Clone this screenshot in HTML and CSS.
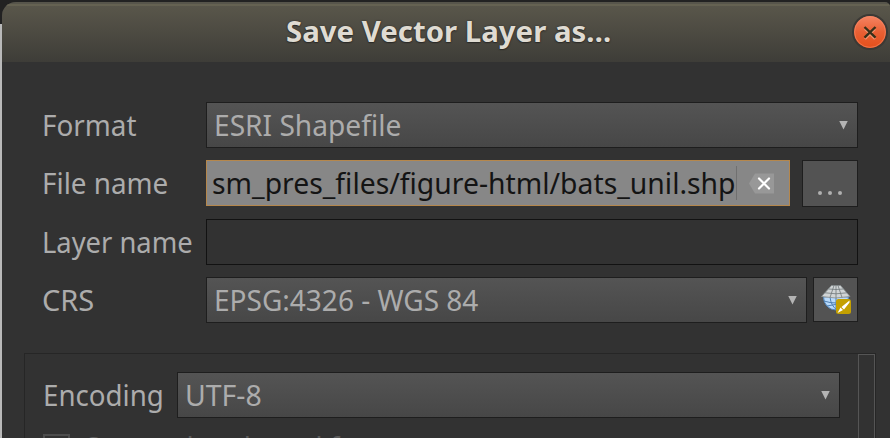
FILE: index.html
```
<!DOCTYPE html>
<html lang="en">
<head>
<meta charset="utf-8">
<title>Save Vector Layer as…</title>
<link rel="stylesheet" href="styles.css">
</head>
<body>
<main class="dialog">
  <header class="titlebar">
    <h1 class="title"><span class="t-title">Save Vector Layer as…</span></h1>
    <button class="close" aria-label="Close">
      <svg viewBox="0 0 36 36" width="36" height="36">
        <defs><linearGradient id="cl" x1="0" y1="0" x2="0" y2="1"><stop offset="0" stop-color="#f58463"/><stop offset=".5" stop-color="#ea6034"/><stop offset="1" stop-color="#e44f1b"/></linearGradient></defs>
        <circle cx="18" cy="18" r="18" fill="#3b3935"/>
        <circle cx="18" cy="18" r="16" fill="url(#cl)"/>
        <circle cx="18" cy="18" r="15.4" fill="none" stroke="#f58a68" stroke-opacity=".6"/>
        <path d="M13 15l10 10M23 15l-10 10" stroke="#f7946f" stroke-width="2.4"/>
        <path d="M12.500 13l11 10.600M23.500 13l-11 10.600" stroke="#38301a" stroke-width="2.400"/>
      </svg>
    </button>
  </header>
  <section class="form">
    <div class="row">
      <label class="label"><span class="t-format">Format</span></label>
      <div class="combo"><span class="t-esri">ESRI Shapefile</span><i class="arrow"></i></div>
    </div>
    <div class="row">
      <label class="label"><span class="t-file">File name</span></label>
      <div class="field">
        <span class="t-path">sm_pres_files/figure-html/bats_unil.shp</span><i class="caret"></i>
        <svg class="clear" viewBox="0 0 26 21" width="26" height="21"><path d="M0 10.500L6 .5h19v20H6z" fill="#989898"/><path d="M10 5.500l10 10M20 5.500l-10 10" stroke="#fff" stroke-width="2.200" stroke-linecap="round"/></svg>
      </div>
      <button class="browse" aria-label="Browse"><i></i><i></i><i></i></button>
    </div>
    <div class="row">
      <label class="label"><span class="t-layer">Layer name</span></label>
      <div class="empty"></div>
    </div>
    <div class="row last">
      <label class="label"><span class="t-crs">CRS</span></label>
      <div class="combo"><span class="t-epsg">EPSG:4326 - WGS 84</span><i class="arrow"></i></div>
      <button class="crs" aria-label="Select CRS">
        <svg viewBox="0 0 32 32" width="32" height="32">
          <path d="M3.500 13a12.500 13 0 0 0 25 0z" fill="#b9dafa" stroke="#5488bd"/>
          <path d="M4 17q12 4 24 0M10 13q1 9 7 13M16 13v13M7 22q8-3 17 0" fill="none" stroke="#4e80b4"/>
          <path d="M11.500 1.500h9l9.500 11q-14 3-28.500 0z" fill="#d0d4d5" stroke="#858b8e" stroke-width=".8"/>
          <path d="M8.500 5q7.500 1 15 0M5 8.800q11 2 22 0M14 1.500l-4 12M18 1.500l4 12M16 1.500v12.500" fill="none" stroke="#70777a" stroke-width=".8"/>
          <rect x="16" y="15" width="15" height="15" rx="2.500" fill="#c4a000"/>
          <path d="M29.500 16.500l-8 6.500 2.500 2.500 5.500-7zM20.500 23.500l-3 5.500 5.500-3z" fill="#fff"/>
        </svg>
      </button>
    </div>
  </section>
  <section class="options">
    <div class="pane">
      <div class="encoding">
        <label><span class="t-enc">Encoding</span></label>
        <div class="combo"><span class="t-utf">UTF-8</span><i class="arrow"></i></div>
      </div>
      <div class="check"><i class="box"></i><span class="t-save">Save only selected features</span></div>
    </div>
    <div class="scroll"></div>
  </section>
</main>
</body>
</html>
```
FILE: styles.css
```
* { box-sizing: border-box; }
html, body { margin: 0; width: 890px; height: 438px; overflow: hidden; }
body {
  background: linear-gradient(#222 24px, #b9b9b9 24px);
  font: 29px/40px "Noto Sans", sans-serif;
  color: #acacac;
}
button { padding: 0; margin: 0; }
.dialog { margin: 2px 0 0 2px; width: 888px; height: 436px; overflow: hidden; background: #323232; border-radius: 14px 5px 0 0; }
.titlebar {
  height: 60px; display: flex; align-items: flex-start;
  background: linear-gradient(#5a574b, #3e3d38);
  border-top: 2px solid #57554b;
  box-shadow: inset 0 2px #656252;
}
.title { margin: 0; flex: 1; padding-left: 284px; font-size: 29px; font-weight: 700; color: #dfdbd2; line-height: 54px; text-shadow: 0 0 2px #2c2b28, 0 1px 1px #2c2b28; }
.close { border: 0; background: none; width: 36px; height: 36px; margin: 10px 2px 0 0; }
.close svg { display: block; }
span { display: inline-block; white-space: nowrap; transform-origin: 0 50%; }
.t-title { transform: scaleX(1.013); }
.t-format { transform: scaleX(.96); }
.t-esri { transform: translateX(-1px) scaleX(.97); }
.t-file { transform: scaleX(.96); }
.t-layer { transform: scaleX(.943); }
.t-epsg { transform: translateX(-1px) scaleX(.966); }
.t-enc { transform: scaleX(.955); }
.t-utf { transform: translateX(-1px) scaleX(.98); }
.t-save { transform: scaleX(.955); }
.form { padding: 40px 32px 0 40px; display: grid; row-gap: 12px; }
.row { display: flex; height: 46px; align-items: stretch; }
.row:nth-child(2) { height: 47px; }
.row.last { height: 46px; }
.label { width: 164px; flex: none; line-height: 46px; }
.combo {
  flex: 1; min-width: 0; height: 46px; display: flex; align-items: center; justify-content: space-between;
  padding: 0 9px 0 8px; border: 1px solid #1e1e1e; background: linear-gradient(#545454, #474747);
}
.arrow { width: 9px; height: 9px; background: #b4b4b4; clip-path: polygon(0 0, 100% 0, 50% 100%); }
.field { width: 584px; height: 46px; border: 1px solid #b5874c; background: #878787; color: #141414; display: flex; align-items: center; padding-left: 5px; }
.t-path { width: 524px; flex: none; transform: scaleX(.977); }
.caret { width: 1px; height: 34px; background: #707070; margin-right: 12px; }
.clear { flex: none; }
.browse { width: 56px; margin-left: 12px; border: 1px solid #1e1e1e; background: #535353; display: flex; gap: 6px; justify-content: center; align-items: flex-end; padding-bottom: 11px; }
.browse i { width: 4px; height: 4px; border-radius: 50%; background: #b0b0b0; }
.empty { flex: 1; height: 46px; border: 1px solid #121212; }
.crs { width: 45px; height: 45px; margin-left: 6px; border: 1px solid #1e1e1e; background: #535353; display: flex; align-items: center; justify-content: center; }
.options { margin: 30px 14px 0 22px; height: 86px; border: 1px solid #262626; border-bottom: 0; display: flex; overflow: hidden; }
.pane { flex: 1; padding: 18px 18px 0 18px; }
.encoding { display: flex; line-height: 46px; }
.encoding label { width: 134px; }
.check { display: flex; margin-top: 16px; gap: 15px; color: #5b5b5b; }
.box { width: 27px; height: 27px; border: 2px solid #4d4d4d; }
.t-save { line-height: 25px; }
.scroll { width: 17px; border: 1px solid #555; border-bottom: 0; }
```
